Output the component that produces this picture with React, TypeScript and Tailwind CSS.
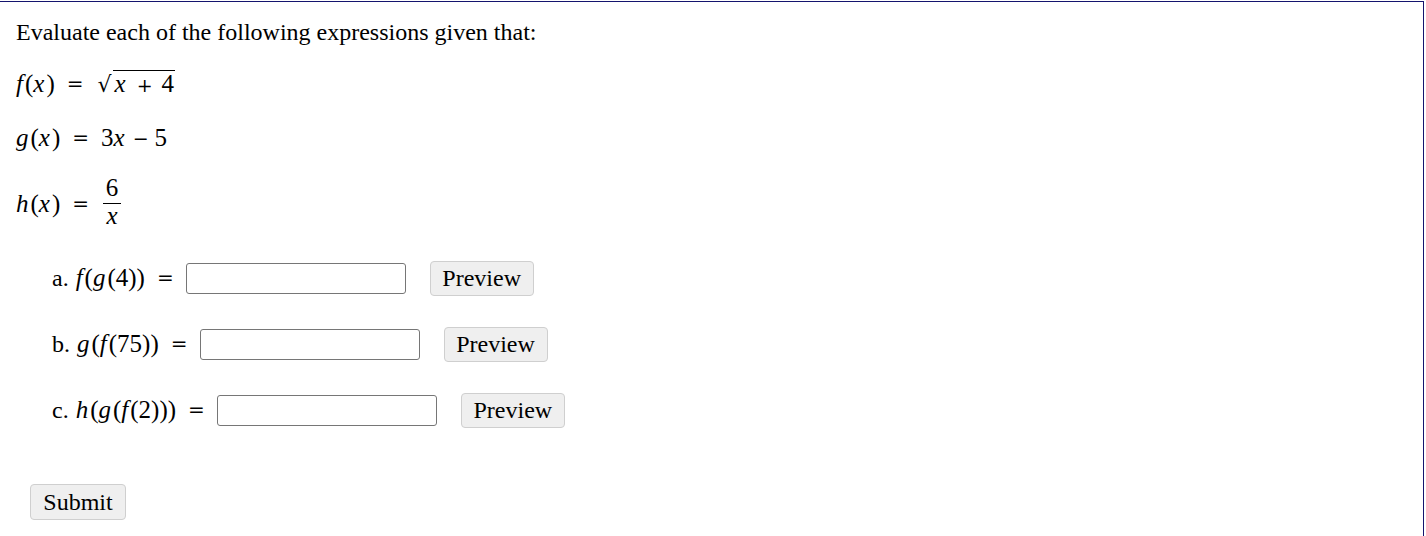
import React from 'react';

const serif = 'font-["Liberation_Serif","Times_New_Roman",serif]';

function V({ children }: { children: React.ReactNode }) {
  return <span className="italic mr-[2px]">{children}</span>;
}

function Eq() {
  return <span className='mx-[12px] font-["DejaVu_Serif",serif] text-[20px]'>=</span>;
}

function Op({ children, tight }: { children: React.ReactNode; tight?: boolean }) {
  return (
    <span className={`${tight ? 'mx-[6px]' : 'mx-[9px]'} font-["DejaVu_Serif",serif] text-[19px]`}>
      {children}
    </span>
  );
}

function AnswerRow({ label, expr }: { label: string; expr: React.ReactNode }) {
  return (
    <div className="flex items-center h-[38px] pl-[52px]">
      <span className="text-[24px] mr-[7px]">{label}</span>
      <span className="text-[25px] whitespace-nowrap">{expr}</span>
      <Eq />
      <input
        type="text"
        className="w-[220px] h-[31px] border border-[#767676] rounded-[3px] px-1 text-[16px] outline-none"
      />
      <button className="ml-[24px] h-[35px] w-[104px] bg-[#efefef] border border-[#cfcfcf] rounded-[4px] text-[24px] leading-none">
        Preview
      </button>
    </div>
  );
}

export default function App() {
  return (
    <div className={`bg-white w-[1426px] h-[536px] pt-px ${serif} text-black overflow-hidden`}>
      <div className="w-[1424px] h-[560px] border-t border-r border-[#14146e]">
        <div className="flex items-center h-[34px] mt-[13px] pl-4 text-[24px]">
          Evaluate each of the following expressions given that:
        </div>

        <div className="flex items-center h-[34px] mt-[18px] pl-4 text-[25px]">
          <V>f</V>(<V>x</V>)
          <Eq />
          <span className='font-["DejaVu_Serif",serif] text-[22px] ml-[2px] mr-[1px]'>√</span>
          <span className="border-t border-black leading-[26px] pl-[2px] pr-[1px]">
            <V>x</V>
            <Op>+</Op>4
          </span>
        </div>

        <div className="flex items-center h-[34px] mt-[20px] pl-4 text-[25px]">
          <V>g</V>(<V>x</V>)
          <Eq />
          3<V>x</V>
          <Op tight>−</Op>5
        </div>

        <div className="flex items-center h-[62px] mt-[18px] pl-4 text-[25px]">
          <V>h</V>(<V>x</V>)
          <Eq />
          <span className="inline-flex flex-col items-center -mt-[4px] ml-[2px]">
            <span className="leading-[24px] mb-[3px]">6</span>
            <span className="border-t border-black w-[18px] text-center leading-[24px]">
              <span className="italic">x</span>
            </span>
          </span>
        </div>

        <div className="mt-[24px]">
          <AnswerRow
            label="a."
            expr={
              <>
                <V>f</V>(<V>g</V>(4))
              </>
            }
          />
        </div>
        <div className="mt-[28px]">
          <AnswerRow
            label="b."
            expr={
              <>
                <V>g</V>(<V>f</V>(75))
              </>
            }
          />
        </div>
        <div className="mt-[28px]">
          <AnswerRow
            label="c."
            expr={
              <>
                <V>h</V>(<V>g</V>(<V>f</V>(2)))
              </>
            }
          />
        </div>

        <div className="mt-[55px] pl-[30px]">
          <button className="h-[36px] w-[96px] bg-[#efefef] border border-[#cfcfcf] rounded-[4px] text-[24px] leading-none">
            Submit
          </button>
        </div>
      </div>
    </div>
  );
}
